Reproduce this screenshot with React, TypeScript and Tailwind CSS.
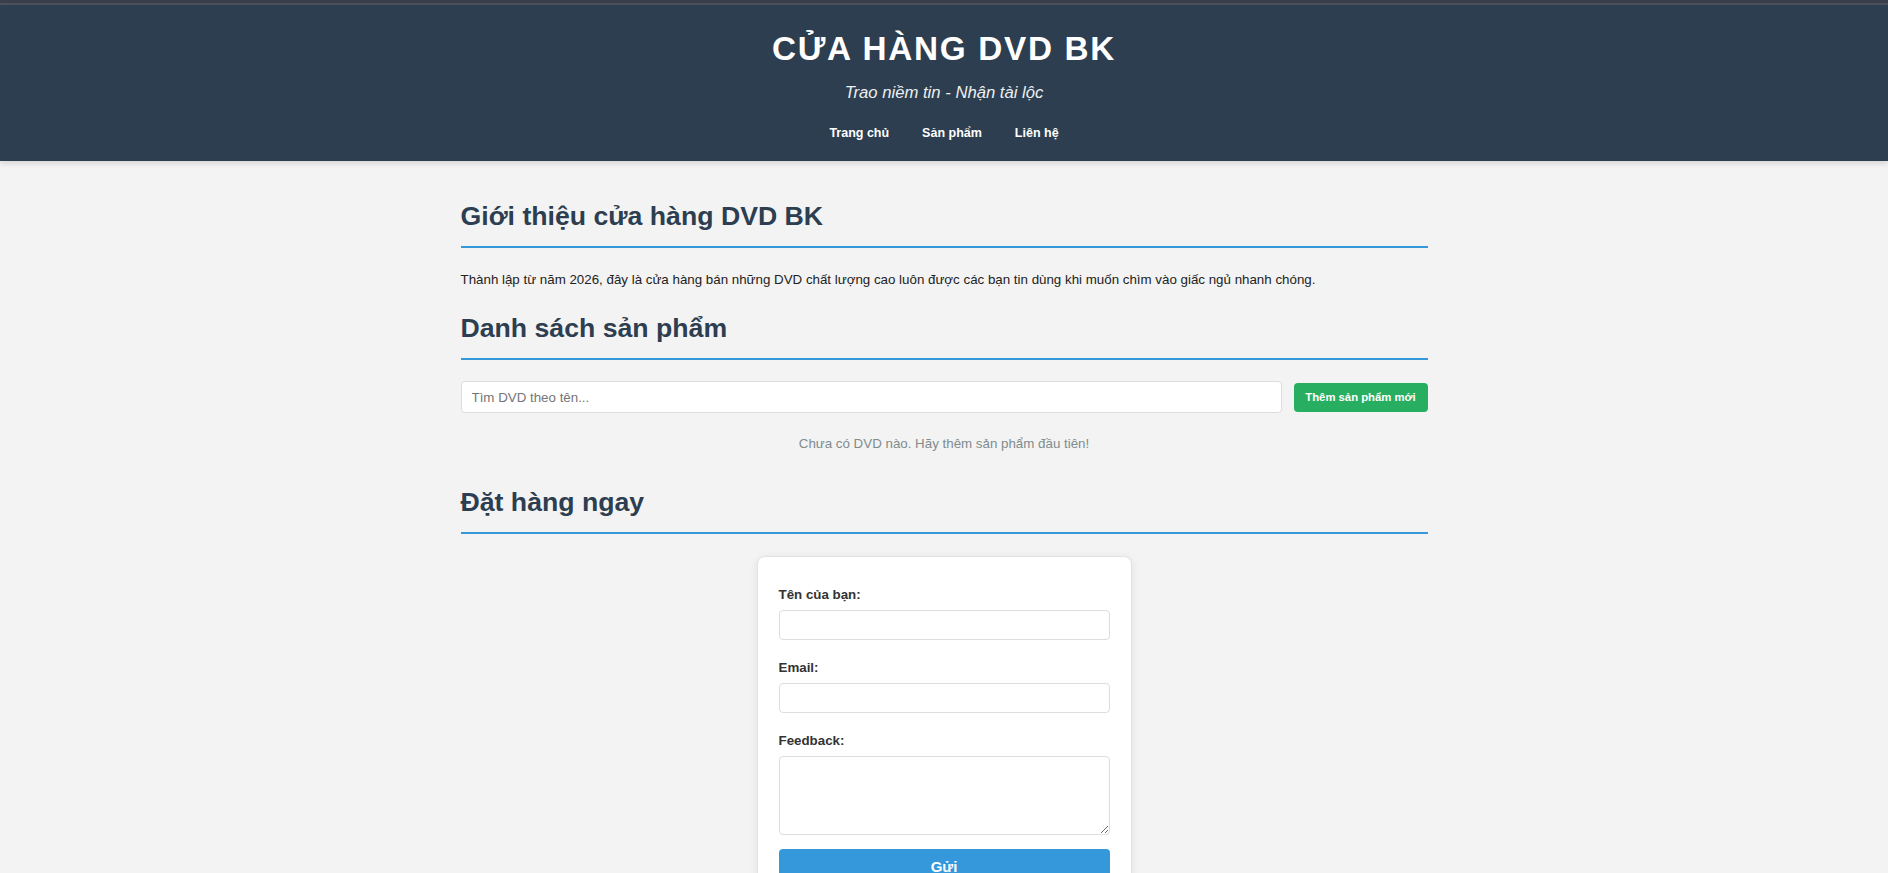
import { useState } from "react";

const navLinks = ["Trang chủ", "Sản phẩm", "Liên hệ"];

function SectionTitle({ children, className = "" }: { children: string; className?: string }) {
  return (
    <h2
      className={`text-[26.67px] leading-[31px] font-bold text-[#2c3e50] pb-[14px] border-b-2 border-[#3498db] ${className}`}
    >
      {children}
    </h2>
  );
}

export default function App() {
  const [query, setQuery] = useState("");

  return (
    <div className="min-h-screen bg-[#f3f3f3] font-['Liberation_Sans',Arial,sans-serif] text-[#333]">
      {/* browser chrome strip */}
      <div className="h-[3px] bg-[#3a3f4c]" />
      <div className="h-[2px] bg-[#4f525a]" />

      <header className="bg-[#2c3e50] pt-[25px] pb-[20px] text-center text-white shadow-[0_2px_6px_rgba(0,0,0,0.15)]">
        <h1 className="text-[33.3px] leading-[37px] font-bold tracking-[1.7px]">CỬA HÀNG DVD BK</h1>
        <p className="mt-[17px] text-[16.67px] leading-[18px] italic text-[#ecf0f1]">
          Trao niềm tin - Nhận tài lộc
        </p>
        <nav className="mt-[23px] flex justify-center gap-[33px]">
          {navLinks.map((l) => (
            <a key={l} href="#" className="text-[12.5px] leading-[16px] font-bold text-white">
              {l}
            </a>
          ))}
        </nav>
      </header>

      <main className="mx-auto w-[967px] pt-[40px] pb-[40px]">
        <SectionTitle>Giới thiệu cửa hàng DVD BK</SectionTitle>
        <p className="mt-[24px] text-[13.33px] leading-[16px] text-[#222]">
          Thành lập từ năm 2026, đây là cửa hàng bán những DVD chất lượng cao luôn được các bạn tin dùng khi muốn
          chìm vào giấc ngủ nhanh chóng.
        </p>

        <SectionTitle className="mt-[25px]">Danh sách sản phẩm</SectionTitle>
        <div className="mt-[21px] flex items-center gap-[12px]">
          <input
            value={query}
            onChange={(e) => setQuery(e.target.value)}
            placeholder="Tìm DVD theo tên..."
            className="flex-1 h-[32px] px-[10px] bg-white border border-[#ddd] rounded-[4px] text-[13.33px] placeholder:text-[#757575] outline-none"
          />
          <button className="w-[134px] h-[29px] bg-[#27ae60] rounded-[4px] text-white text-[11.3px] font-bold">
            Thêm sản phẩm mới
          </button>
        </div>
        <p className="mt-[23px] text-center text-[13.33px] leading-[16px] text-[#7f8c8d]">
          Chưa có DVD nào. Hãy thêm sản phẩm đầu tiên!
        </p>

        <SectionTitle className="mt-[35px]">Đặt hàng ngay</SectionTitle>

        <form
          className="mx-auto mt-[22px] w-[375px] bg-white border border-[#e3e3e3] rounded-[8px] shadow-[0_2px_8px_rgba(0,0,0,0.08)] px-[21px] pt-[30px] pb-[20px]"
          onSubmit={(e) => e.preventDefault()}
        >
          <div>
            <label className="block text-[13.33px] leading-[16px] font-bold text-[#333] mb-[7px]">Tên của bạn:</label>
            <input className="block w-full h-[30px] px-[8px] border border-[#ddd] rounded-[4px] text-[13.33px] outline-none" />
          </div>
          <div className="mt-[20px]">
            <label className="block text-[13.33px] leading-[16px] font-bold text-[#333] mb-[7px]">Email:</label>
            <input
              type="email"
              className="block w-full h-[30px] px-[8px] border border-[#ddd] rounded-[4px] text-[13.33px] outline-none"
            />
          </div>
          <div className="mt-[20px]">
            <label className="block text-[13.33px] leading-[16px] font-bold text-[#333] mb-[7px]">Feedback:</label>
            <textarea className="block w-full h-[79px] px-[8px] py-[6px] border border-[#ddd] rounded-[4px] text-[13.33px] outline-none" />
          </div>
          <button
            type="submit"
            className="mt-[14px] w-full h-[36px] bg-[#3498db] rounded-[4px] text-white text-[15px] font-bold"
          >
            Gửi
          </button>
        </form>
      </main>
    </div>
  );
}
